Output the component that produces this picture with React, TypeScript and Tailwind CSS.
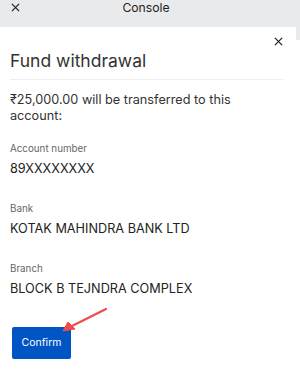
import React from "react";

function CloseIcon({ className }: { className?: string }) {
  return (
    <svg viewBox="0 0 10 10" className={className} fill="none" stroke="currentColor" strokeWidth="1.4">
      <path d="M1 1L9 9M9 1L1 9" />
    </svg>
  );
}

const details = [
  { label: "Account number", value: "89XXXXXXXX" },
  { label: "Bank", value: "KOTAK MAHINDRA BANK LTD" },
  { label: "Branch", value: "BLOCK B TEJNDRA COMPLEX" },
];

export default function App() {
  return (
    <div className="relative h-[378px] w-[300px] overflow-hidden bg-white font-['Inter',sans-serif] text-[#333]">
      {/* Top bar */}
      <div className="relative flex h-[27px] items-start justify-center bg-[#e9eaec] pr-2">
        <CloseIcon className="absolute left-[11px] top-[3px] h-[9px] w-[9px] text-[#222]" />
        <span className="text-[12.2px] leading-[16px] text-[#222]">Console</span>
      </div>

      <div className="flex">
        {/* Modal panel */}
        <div className="relative flex-1 px-[10px]">
          <CloseIcon className="absolute right-[13px] top-[10px] h-[9px] w-[9px] text-[#222]" />

          <h1 className="pt-[23px] text-[17.5px] leading-[22px] font-normal text-[#333]">Fund withdrawal</h1>
          <div className="mt-[7px] mr-[3px] h-px bg-[#eeeeee]" />

          <p className="mt-[12px] text-[12.7px] leading-[16px] text-[#333]">
            ₹25,000.00 will be transferred to this account:
          </p>

          <div className="mt-[19px]">
            {details.map((d, i) => (
              <div key={d.label} className={i > 0 ? "mt-[26px]" : ""}>
                <div className="text-[9.8px] leading-[12px] text-[#666]">{d.label}</div>
                <div className="mt-[6px] text-[12.7px] leading-[16px] text-[#222]">{d.value}</div>
              </div>
            ))}
          </div>

          <button className="mt-[30px] ml-[2px] flex h-[32px] w-[59px] items-center justify-center rounded-[2px] bg-[#0055c4] text-[10.5px] text-white">
            Confirm
          </button>
        </div>
        <div className="h-[13px] w-[4px] bg-[#e9eaec]" />
      </div>

      {/* Annotation arrow */}
      <svg className="pointer-events-none absolute left-0 top-0" width="300" height="378">
        <line x1="106" y1="309" x2="70" y2="327" stroke="#ef4b4b" strokeWidth="2.2" strokeLinecap="round" />
        <path d="M63 331 L68 322 L75 329 Z" fill="#ef4b4b" stroke="#ef4b4b" strokeWidth="1" strokeLinejoin="round" />
      </svg>
    </div>
  );
}
